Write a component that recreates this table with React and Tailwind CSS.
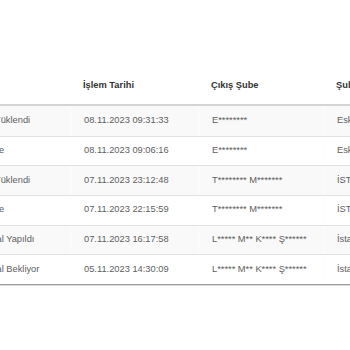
const rows = [
  { durum: 'Yüklendi', lead: '-ml-[5.5px]', tarih: '08.11.2023 09:31:33', cikis: 'E********', sube: 'Eskişehir' },
  { durum: 'e', lead: '-ml-[1px]', tarih: '08.11.2023 09:06:16', cikis: 'E********', sube: 'Eskişehir' },
  { durum: 'Yüklendi', lead: '-ml-[5.5px]', tarih: '07.11.2023 23:12:48', cikis: 'T******** M*******', sube: 'İSTANBUL' },
  { durum: 'e', lead: '-ml-[1px]', tarih: '07.11.2023 22:15:59', cikis: 'T******** M*******', sube: 'İSTANBUL' },
  { durum: 'al Yapıldı', lead: '-ml-[3.5px]', tarih: '07.11.2023 16:17:58', cikis: 'L***** M** K**** Ş******', sube: 'İstanbul' },
  { durum: 'al Bekliyor', lead: '-ml-[3.5px]', tarih: '05.11.2023 14:30:09', cikis: 'L***** M** K**** Ş******', sube: 'İstanbul' },
];

export default function App() {
  return (
    <div className="w-[350px] h-[350px] overflow-hidden bg-white font-['Liberation_Sans',Arial,sans-serif] text-[9.3px] text-[#5e5e5e]">
      {/* Table */}
      <div className="pt-[64px]">
        <div className="grid grid-cols-[70px_128px_125px_1fr] h-[42px] pt-[3px] items-center border-b-2 border-[#d4d4d4] font-bold text-[#333]">
          <div />
          <div className="pl-[13px] whitespace-nowrap">İşlem Tarihi</div>
          <div className="pl-[13px] whitespace-nowrap">Çıkış Şube</div>
          <div className="pl-[13px] whitespace-nowrap overflow-hidden">Şube</div>
        </div>

        <div className="border-b border-[#9a9a9a] shadow-[0_1px_0_#dcdcdc]">
          {rows.map((r, i) => (
            <div
              key={i}
              className={`grid grid-cols-[70px_128px_125px_1fr] h-[29.67px] items-center ${i > 0 ? 'border-t border-[#e2e2e2]' : ''} ${i % 2 === 0 ? 'bg-[#f9f9f9]' : 'bg-white'}`}
            >
              <div className="overflow-hidden whitespace-nowrap">
                <span className={`inline-block ${r.lead}`}>{r.durum}</span>
              </div>
              <div className="pl-[13px] h-full flex items-center border-l border-[#fdfdfd] whitespace-nowrap">{r.tarih}</div>
              <div className="pl-[13px] h-full flex items-center border-l border-[#fdfdfd] whitespace-nowrap">{r.cikis}</div>
              <div className="pl-[13px] h-full flex items-center border-l border-[#fdfdfd] whitespace-nowrap overflow-hidden">{r.sube}</div>
            </div>
          ))}
        </div>
      </div>
    </div>
  );
}
